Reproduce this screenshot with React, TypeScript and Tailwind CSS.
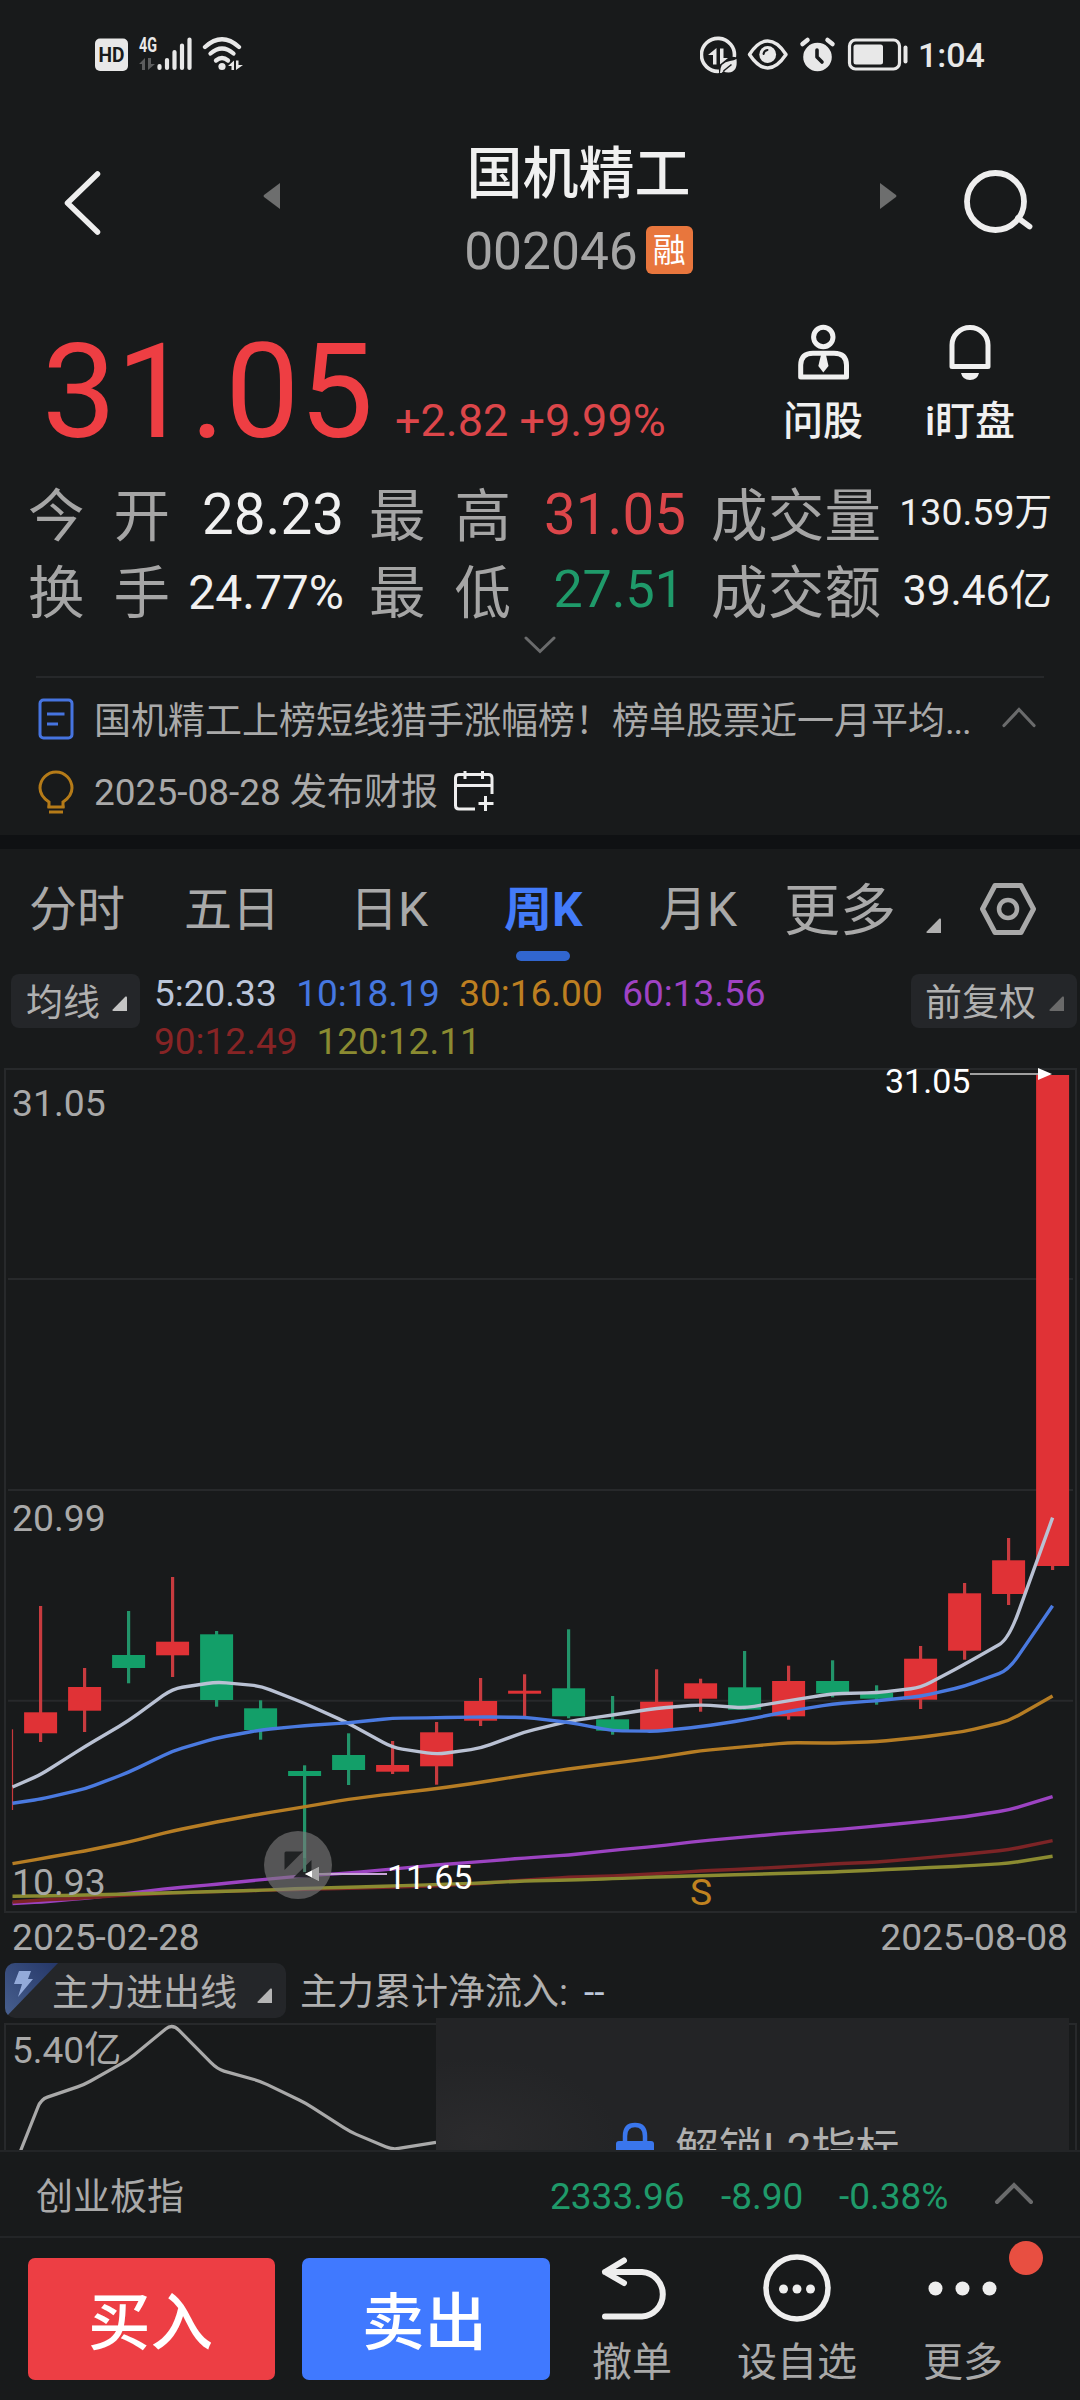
import React from "react";

type Pt = [number, number];

const RED = "#e03236";
const GREEN = "#139f69";

const X0 = 40.6;
const STEP = 44;

/* [up, high, bodyTop, bodyBottom, low] in chart pixels */
const candles: [boolean, number, number, number, number][] = [
  [true, 538, 644.3, 665.3, 674],
  [true, 600, 619, 642.7, 664],
  [false, 543, 587, 600, 615.3],
  [true, 509, 573.7, 587.3, 609],
  [false, 563, 566.3, 632, 638.7],
  [false, 632.3, 640.3, 662, 671.7],
  [false, 697.3, 703, 708, 806],
  [false, 665.3, 687, 702, 717],
  [true, 673, 697, 703.7, 706],
  [true, 654, 664.3, 698.3, 716.7],
  [true, 610, 633, 652.7, 658],
  [true, 606.3, 622.7, 625.7, 648.7],
  [false, 561.3, 620.3, 648.3, 650.3],
  [false, 628, 651.3, 662.7, 666.7],
  [true, 601.3, 633.7, 662.7, 662.7],
  [true, 610.7, 615.3, 630.7, 643.7],
  [false, 583, 619.3, 641.7, 641.7],
  [true, 597.7, 613, 648.3, 651.7],
  [false, 592.3, 613, 625.3, 629.3],
  [false, 617.3, 624.7, 630.7, 636.7],
  [true, 578, 590.7, 631.7, 641],
  [true, 515, 525.3, 582.7, 591.7],
  [true, 470, 492.3, 526, 537],
  [true, 7, 7, 498, 502],
];

const ma5 = [706.7, 678.7, 652.7, 620.7, 614, 618, 635.3, 655.3, 679.7, 686.3, 680.3, 664, 653.3, 647, 640.3, 636.7, 640, 632.7, 625.7, 624.7, 619.7, 596.3, 571.3, 449.7];
const ma10 = [731, 721, 704.3, 683, 670, 662, 657.7, 654.7, 650.3, 649.7, 649, 649.3, 654.3, 662.7, 663.3, 658.7, 652, 643.3, 636, 632.7, 628.3, 618.3, 602, 537.7];
const ma30 = [790.7, 783, 774, 763, 754, 746, 738.7, 731.3, 725.7, 720.7, 714.3, 707.3, 701, 695.3, 689.7, 682.7, 678.7, 674.7, 675, 673.7, 669.3, 663.3, 653, 628];
const ma60 = [834, 830.3, 825.3, 820, 816.3, 811.7, 807.7, 805, 801, 797, 793.7, 790, 787, 782.3, 778.3, 773, 769, 765, 762, 758, 753.7, 748.7, 742, 728.7];
const ma90 = [832, 830, 827, 825, 823.5, 822.3, 821.3, 820.3, 819, 817.7, 815.5, 812, 809.3, 808, 805.7, 803, 801, 798.7, 796, 794, 790.3, 786.3, 781.7, 772.7];
const ma120 = [828, 827, 826, 824.7, 823.5, 822.3, 820.3, 819.3, 818, 816.5, 815, 813, 812, 810.7, 809, 807.7, 806.5, 805.3, 804, 802, 800, 798, 795.3, 788.3];

/* Polyline with slightly rounded joints */
function smooth(pts: Pt[], t = 0.22) {
  let d = `M${pts[0][0]} ${pts[0][1]}`;
  for (let i = 1; i < pts.length - 1; i++) {
    const [px, py] = pts[i - 1];
    const [cx, cy] = pts[i];
    const [nx, ny] = pts[i + 1];
    d += `L${cx + (px - cx) * t} ${cy + (py - cy) * t}Q${cx} ${cy} ${cx + (nx - cx) * t} ${cy + (ny - cy) * t}`;
  }
  const l = pts[pts.length - 1];
  return `${d}L${l[0]} ${l[1]}`;
}

function Line({ start, data, color }: { start: number; data: number[]; color: string }) {
  const pts: Pt[] = [[12.5, start], ...data.map((y, i): Pt => [X0 + i * STEP, y])];
  return <path d={smooth(pts)} fill="none" stroke={color} strokeWidth="3.4" />;
}

function Corner({ color = "#b0b0b0" }: { color?: string }) {
  return (
    <svg width="15" height="15" viewBox="0 0 15 15" className="block shrink-0">
      <path d="M13.5 0.5Q15 0 15 1.5V15H1.5Q0 15 0.5 13.8Z" fill={color} />
    </svg>
  );
}

function StatusBar() {
  return (
    <div className="flex h-[110px] items-center justify-between pl-[95px] pr-[95px]">
      <svg width="150" height="50" viewBox="95 30 150 50" className="block">
        <rect x="95" y="38.500" width="33" height="32.500" rx="5" fill="#e8e8e8" />
        <text x="111.500" y="62" textAnchor="middle" fontSize="20" fontWeight="700" textLength="26" lengthAdjust="spacingAndGlyphs" fill="#181a1b">HD</text>
        <text x="139" y="52" fontSize="20" fontWeight="700" textLength="18" lengthAdjust="spacingAndGlyphs" fill="#e8e8e8">4G</text>
        <path d="M139 64L145 58V70H142V64ZM148 58H151V64H155L148 70Z" fill="#5c5d5e" />
        <g stroke="#e8e8e8" strokeWidth="4.200" strokeLinecap="round">
          <path d="M159.500 66V68M167 60V68M174.500 52V68M182 45.500V68M189.500 39.500V68" />
        </g>
        <g fill="none" stroke="#e8e8e8" strokeWidth="4.300" strokeLinecap="round">
          <path d="M205 47Q222 31.500 239 47" />
          <path d="M210.500 53.500Q222 43.500 233.500 53.500" />
          <path d="M216 60.500Q222 55.500 228 60.500" />
        </g>
        <circle cx="222" cy="66.500" r="3.600" fill="#e8e8e8" />
        <path d="M228 66L234 60.500V70H231.500V66ZM236 60.500H238.500V65H243L236 70Z" fill="#e8e8e8" />
      </svg>
      <div className="flex items-center">
        <svg width="210" height="38" viewBox="700 36 210 38" className="block">
          <path d="M719 71.300A16.500 16.500 0 1 1 734.300 57" fill="none" stroke="#e8e8e8" strokeWidth="3.600" />
          <path d="M708 55L716.500 48V64.500H713V55ZM720 48.500H723.500V58H728L720 64.500Z" fill="#e8e8e8" />
          <path d="M736.500 59Q738 72 728.500 72.500Q725 72.500 723.500 71L721.500 73H720Q720 62 730 61Q734 60.500 736.500 59Z" fill="#e8e8e8" />
          <path d="M723.500 71L731.500 64.500" stroke="#181a1b" strokeWidth="1.500" />
          <path d="M749.500 54.500Q758 41 767.700 41T786 54.500Q777 68 767.700 68T749.500 54.500Z" fill="none" stroke="#e8e8e8" strokeWidth="3.400" strokeLinejoin="round" />
          <circle cx="767.700" cy="54.500" r="8.400" fill="#e8e8e8" />
          <path d="M763.500 54Q764 50.500 767.500 50" fill="none" stroke="#181a1b" strokeWidth="2" strokeLinecap="round" />
          <circle cx="817.500" cy="57" r="14.300" fill="#e8e8e8" />
          <path d="M817 50V57L822 62" fill="none" stroke="#181a1b" strokeWidth="3.600" strokeLinecap="round" strokeLinejoin="round" />
          <path d="M802.500 44L807.500 40M832.500 44L827.500 40" stroke="#e8e8e8" strokeWidth="4.500" strokeLinecap="round" />
          <rect x="849.500" y="40" width="50" height="29" rx="6" fill="none" stroke="#e8e8e8" strokeWidth="3.200" />
          <rect x="853.500" y="44.500" width="29.500" height="20" rx="2.500" fill="#e8e8e8" />
          <path d="M905.500 47.500V61.500" stroke="#e8e8e8" strokeWidth="4" strokeLinecap="round" />
        </svg>
        <span className="w-[75px] pl-[8px] text-[34px] font-medium leading-[40px] whitespace-nowrap text-[#e8e8e8]">1:04</span>
      </div>
    </div>
  );
}

function Header() {
  return (
    <header className="flex h-[190px] items-start">
      <svg width="40" height="70" viewBox="62 168 40 70" className="ml-[62px] mt-[58px] block">
        <path d="M97.500 174L67.500 203L97.500 232" fill="none" stroke="#eeeeee" strokeWidth="5.500" strokeLinecap="round" strokeLinejoin="round" />
      </svg>
      <svg width="18" height="28" viewBox="0 0 18 28" className="ml-[161px] mt-[72px] block">
        <path d="M17 1V27L1 15Q0 14 1 13Z" fill="#6d6e6e" />
      </svg>
      <div className="flex w-[598px] flex-col items-center pr-[3px] pt-[34px]">
        <h1 className="text-[56px] font-medium leading-[60px] text-[#f0f0f0]">国机精工</h1>
        <div className="mt-[22px] flex h-[48px] items-center gap-[8px]">
          <span className="pt-[4px] text-[51.5px] leading-[48px] text-[#a5a5a5]">002046</span>
          <span className="flex h-[48px] w-[47px] items-center justify-center rounded-[6px] bg-[#e8763d] pt-[2px] text-[33px] leading-[46px] text-white">融</span>
        </div>
      </div>
      <svg width="18" height="28" viewBox="0 0 18 28" className="mt-[72px] block">
        <path d="M1 1V27L17 15Q18 14 17 13Z" fill="#6d6e6e" />
      </svg>
      <svg width="72" height="68" viewBox="963 168 72 68" className="ml-[66px] mt-[58px] block">
        <circle cx="995.500" cy="201.500" r="28.500" fill="none" stroke="#eeeeee" strokeWidth="5.800" />
        <path d="M1018 218L1029.500 226.500" stroke="#eeeeee" strokeWidth="5.800" strokeLinecap="round" />
      </svg>
    </header>
  );
}

function Price() {
  return (
    <section className="flex h-[177px] items-start">
      <div className="w-[395px] pl-[42px] pt-[27px] text-[132px] leading-[130px] text-[#ee3e43]">31.05</div>
      <div className="w-[356px] pt-[97px] text-[45px] leading-[48px] whitespace-nowrap text-[#dc464a]">+2.82 +9.99%</div>
      <div className="flex w-[144px] flex-col items-center text-[40px] font-medium leading-[48px] text-[#f0f0f0]">
        <svg width="56" height="60" viewBox="794 322 56 60" className="mt-[22px] block">
          <circle cx="822.300" cy="337" r="9.700" fill="none" stroke="currentColor" strokeWidth="5" />
          <path d="M799.700 377V365Q800 353.200 812 353.200H833Q845.300 353.200 845.500 365V377Z" fill="none" stroke="currentColor" strokeWidth="5" strokeLinejoin="round" />
          <path d="M820 355H825L827.500 366L822.300 372.500L817.300 366Z" fill="currentColor" />
        </svg>
        <span className="mt-[16px]">问股</span>
      </div>
      <div className="flex w-[150px] flex-col items-center text-[40px] font-medium leading-[48px] text-[#f0f0f0]">
        <svg width="46" height="60" viewBox="946.500 322 46 60" className="mt-[22px] block">
          <path d="M951.500 366.500V345A18 17.500 0 0 1 987.500 345V366.500Z" fill="none" stroke="currentColor" strokeWidth="5" strokeLinejoin="round" />
          <path d="M960.500 373H978.500Q977 380 969.500 380T960.500 373Z" fill="currentColor" />
        </svg>
        <span className="mt-[16px]">i盯盘</span>
      </div>
    </section>
  );
}

function Stat({ label, children }: { label: string; children: React.ReactNode }) {
  return (
    <div className="flex items-center justify-between">
      <span className={label.length === 2 ? "flex w-[142px] justify-between pt-[4px] text-[56.5px] leading-[73px] text-[#a5a5a5]" : "flex w-[170px] justify-between pt-[4px] text-[56.5px] leading-[73px] text-[#a5a5a5]"}>
        {label.split("").map((c) => (
          <span key={c}>{c}</span>
        ))}
      </span>
      {children}
    </div>
  );
}

function Stats() {
  return (
    <section className="grid h-[154px] grid-cols-[318px_319px_342px] grid-rows-[77px_77px] gap-x-[23px] pl-[28px] text-[#f0f0f0]">
      <Stat label="今开"><span className="pr-[2px] text-[56.5px]">28.23</span></Stat>
      <Stat label="最高"><span className="pr-[2px] text-[56.5px] text-[#dc464a]">31.05</span></Stat>
      <Stat label="成交量"><span className="pb-[6px] pr-[1px] text-[37.5px]">130.59万</span></Stat>
      <Stat label="换手"><span className="pr-[2px] text-[48px]">24.77%</span></Stat>
      <Stat label="最低"><span className="pb-[6px] pr-[4px] text-[52px] text-[#1f9a6a]">27.51</span></Stat>
      <Stat label="成交额"><span className="pb-[2px] pr-[1px] text-[42.5px]">39.46亿</span></Stat>
    </section>
  );
}

function News() {
  return (
    <section className="text-[37px] text-[#a9a9a9]">
      <div className="flex h-[45px] items-start justify-center pt-[4px]">
        <svg width="32" height="20" viewBox="0 0 32 20" className="block">
          <path d="M2 3L16 16.500L30 3" fill="none" stroke="#6a6b6c" strokeWidth="3" strokeLinecap="round" />
        </svg>
      </div>
      <div className="mx-[36px] mt-0 h-[2px] bg-[#26282a]" />
      <div className="mt-[4px] flex h-[80px] items-center pl-[38px]">
        <svg width="36" height="42" viewBox="38 698 36 42" className="mb-[6px] block">
          <rect x="40" y="700" width="32" height="38" rx="3.500" fill="none" stroke="#4674e0" strokeWidth="3" />
          <path d="M47 714H64.500M47 724H58" stroke="#4674e0" strokeWidth="3.200" />
        </svg>
        <span className="w-[908px] pl-[20px] leading-[56px] whitespace-nowrap">国机精工上榜短线猎手涨幅榜！榜单股票近一月平均<span className="tracking-[-1.3px]">...</span></span>
        <svg width="36" height="24" viewBox="0 0 36 24" className="mb-[10px] ml-[19px] block">
          <path d="M3 20.500L18 4.500L33 20.500" fill="none" stroke="#6a6b6c" strokeWidth="3.200" strokeLinecap="round" />
        </svg>
      </div>
      <div className="flex h-[62px] items-center pl-[38px]">
        <svg width="36" height="46" viewBox="38 768 36 46" className="mb-[3px] block">
          <path d="M49 807V801Q40 795 40 787A16 16 0 0 1 72 787Q72 795 63 801V807" fill="none" stroke="#b57b18" strokeWidth="3" />
          <path d="M47.500 806H64.500M49 811H63" stroke="#b57b18" strokeWidth="3" />
        </svg>
        <span className="w-[378px] pl-[20px] leading-[56px] whitespace-nowrap">2025-08-28 发布财报</span>
        <svg width="44" height="44" viewBox="452 769 44 44" className="mb-[4px] block">
          <path d="M475 809H459Q455.500 809 455.500 805.500V778Q455.500 774.500 459 774.500H488.500Q492 774.500 492 778V794M456 785.500H492M465 771V779M482.500 771V779M485.500 796V811M478.500 803.500H493.500" fill="none" stroke="#eeeeee" strokeWidth="3" />
        </svg>
      </div>
      <div className="mt-[11px] h-[14px] bg-[#0f1113]" />
    </section>
  );
}

function Tabs() {
  return (
    <nav className="flex h-[120px] items-center pl-[29px] text-[48px] whitespace-nowrap text-[#a9a9a9]">
      <span className="w-[155px] pt-[2px]">分时</span>
      <span className="w-[166px] pt-[2px]">五日</span>
      <span className="w-[154px] pt-[2px]">日K</span>
      <span className="relative w-[155px] pt-[2px] font-bold text-[#437bfa]">
        周K
        <span className="absolute left-[12px] top-[67px] h-[10px] w-[54px] rounded-full bg-[#3166cf]" />
      </span>
      <span className="w-[125px] pt-[2px]">月K</span>
      <span className="w-[142px] pt-[4px] text-[56px]">更多</span>
      <span className="pt-[33px]"><Corner /></span>
      <svg width="60" height="56" viewBox="978 881 60 56" className="ml-[37px] block">
        <path d="M982.500 909L995 885.500H1021L1033.500 909L1021 932.500H995Z" fill="none" stroke="#a9a9a9" strokeWidth="5" strokeLinejoin="round" />
        <circle cx="1008" cy="909" r="9" fill="none" stroke="#a9a9a9" strokeWidth="4.500" />
      </svg>
    </nav>
  );
}

function Averages() {
  return (
    <section className="flex h-[99px] items-start text-[37px] whitespace-nowrap">
      <div className="ml-[11px] mt-[5px] flex h-[54px] w-[129px] items-center rounded-[8px] bg-[#242629] pl-[15px] pt-[5px] text-[#b0b0b0]">
        <span className="w-[86px]">均线</span>
        <Corner color="#c4c4c4" />
      </div>
      <div className="w-[771px] pl-[14px] pt-[1px] leading-[48px]">
        <div className="flex gap-[19.5px]">
          <span className="text-[#bcc6da]">5:20.33</span>
          <span className="text-[#4577e0]">10:18.19</span>
          <span className="text-[#bd7f21]">30:16.00</span>
          <span className="text-[#9f42c4]">60:13.56</span>
        </div>
        <div className="flex gap-[19px]">
          <span className="text-[#872425]">90:12.49</span>
          <span className="text-[#8b8b31]">120:12.11</span>
        </div>
      </div>
      <div className="mt-[5px] flex h-[54px] w-[166px] items-center rounded-[8px] bg-[#242629] pl-[14px] pt-[5px] text-[#b0b0b0]">
        <span className="w-[124px]">前复权</span>
        <Corner color="#6a6a6a" />
      </div>
    </section>
  );
}

function KChart() {
  return (
    <svg width="1080" height="845" viewBox="0 0 1080 845" className="block overflow-visible">
      <g fill="none" stroke="#27292b" strokeWidth="2">
        <rect x="5" y="1" width="1071" height="843" />
        <path d="M8 211H1073M8 422H1073M8 632.700H1073" />
      </g>
      <path d="M12.500 661.300V742" stroke="#c8383b" strokeWidth="1.200" />
      {candles.map(([up, h, t, b, l], i) => (
        <g key={i}>
          <path d={`M${X0 + i * STEP} ${h}V${l}`} stroke={up ? "#c73b3f" : "#22946a"} strokeWidth="3.2" />
          <rect x={X0 + i * STEP - 16.5} y={t} width="33" height={b - t} fill={up ? RED : GREEN} />
        </g>
      ))}
      <Line start={719} data={ma5} color="#b9c1d3" />
      <Line start={735.3} data={ma10} color="#4a7ae0" />
      <Line start={795.7} data={ma30} color="#b67d24" />
      <Line start={835.5} data={ma60} color="#9c43c2" />
      <Line start={834} data={ma90} color="#7c2426" />
      <Line start={828.3} data={ma120} color="#8b8b31" />
      <g fontSize="37.300" fill="#a9a9a9">
        <text x="12" y="48">31.05</text>
        <text x="12" y="463">20.99</text>
        <text x="12" y="827">10.93</text>
        <text x="690" y="837" fill="#c08320">S</text>
      </g>
      <path d="M970 6H1040" stroke="#a0a0a0" strokeWidth="2" />
      <path d="M1038 0L1052 6L1038 12Z" fill="#ffffff" />
      <path d="M310 806H387" stroke="#c9a5d8" strokeWidth="2" />
      <path d="M305 806L319 799V813Z" fill="#ffffff" />
      <circle cx="298" cy="797" r="34" fill="#7a7a7a" fillOpacity="0.62" />
      <path d="M286 783.500H303L284.500 802V785Q284.500 783.500 286 783.500ZM311.500 792V809.500H293.500Z" fill="#1b1d1e" fillOpacity="0.9" />
      <path d="M304.600 790V804" stroke="#4d7a69" strokeWidth="3" />
      <path d="M305 806L319 799V813Z" fill="#a5a5a5" />
      <path d="M305 806L312 802.500V809.500Z" fill="#ffffff" />
      <g fontSize="34" fill="#ffffff">
        <text x="885" y="25">31.05</text>
        <text x="387" y="821">11.65</text>
      </g>
    </svg>
  );
}

function SubChart() {
  const pts: Pt[] = [[20.5, 133], [41, 81.3], [84, 66.7], [128, 42], [172.300, 5.500], [217.500, 51.300], [260.500, 63.300], [306, 85.300], [350, 113.700], [392, 131.500], [436, 124.300]];
  return (
    <section>
      <div className="flex h-[50px] items-start justify-between pl-[12px] pr-[12px] pt-[1px] text-[37.200px] leading-[46px] text-[#a9a9a9]">
        <span>2025-02-28</span>
        <span>2025-08-08</span>
      </div>
      <div className="flex h-[55px] items-start text-[37px] whitespace-nowrap text-[#b0b0b0]">
        <div className="ml-[5px] flex h-[55px] w-[281px] items-center overflow-hidden rounded-[10px] bg-[#242629]">
          <svg width="47" height="55" viewBox="0 0 47 55" className="block shrink-0 overflow-visible">
            <defs>
              <linearGradient id="tag" x1="0" y1="1" x2="1" y2="0">
                <stop offset="0" stopColor="#48608f" />
                <stop offset="1" stopColor="#253768" />
              </linearGradient>
            </defs>
            <path d="M0 0H53L0 55Z" fill="url(#tag)" />
            <path d="M14 8H26L23 16H28L13 34L17 21H9Z" fill="#93aad9" />
          </svg>
          <span className="w-[205px] pt-[5px]">主力进出线</span>
          <span className="pt-[10px]"><Corner color="#b5b5b5" /></span>
        </div>
        <span className="pl-[14px] leading-[60px]">
          主力累计净流入<span className="pr-[16px]">:</span><span className="text-[#bcc6da]">--</span>
        </span>
      </div>
      <div className="relative h-[132px] overflow-hidden">
        <svg width="1080" height="132" viewBox="0 0 1080 132" className="block">
          <path d="M5 140V6H1076V140" fill="none" stroke="#27292b" strokeWidth="2" />
          <text x="12" y="45" fontSize="37" fill="#a9a9a9">5.40亿</text>
          <path d={smooth(pts, 0.15)} fill="none" stroke="#a9a9a9" strokeWidth="3.200" />
        </svg>
        <div className="absolute left-[436px] top-0 flex h-[132px] w-[633px] items-start bg-[#232426] bg-[radial-gradient(ellipse_140px_80px_at_40px_120px,#2b2b2d,#232426)] pl-[180px] pt-[104px]">
          <svg width="38" height="44" viewBox="0 0 38 44" className="block shrink-0">
            <path d="M9 21V14Q9 3 19 3T29 14V21" fill="none" stroke="#3a76ec" strokeWidth="4.500" />
            <rect x="0" y="19" width="38" height="24" rx="3" fill="#3a76ec" />
          </svg>
          <span className="pl-[21px] text-[44px] leading-[56px] whitespace-nowrap text-[#b0b0b0]">解锁L2指标</span>
        </div>
      </div>
    </section>
  );
}

function IndexBar() {
  return (
    <section className="flex h-[88px] items-center border-y-2 border-[#232527] pl-[36px] text-[37px] whitespace-nowrap text-[#1f9a6a]">
      <span className="w-[514px] pt-[6px] text-[#a9a9a9]">创业板指</span>
      <span className="w-[171px] pt-[4px]">2333.96</span>
      <span className="w-[118px] pt-[4px]">-8.90</span>
      <span className="w-[154px] pt-[4px]">-0.38%</span>
      <svg width="42" height="26" viewBox="0 0 42 26" className="mb-[2px] block">
        <path d="M4 22L21 5L38 22" fill="none" stroke="#6a6b6c" strokeWidth="4" strokeLinecap="round" />
      </svg>
    </section>
  );
}

function BottomBar() {
  return (
    <footer className="flex h-[162px] items-start pl-[28px] text-[40px] whitespace-nowrap text-[#a9a9a9]">
      <button className="mt-[20px] h-[122px] w-[247px] rounded-[7px] bg-[#ed3e44] pr-[2px] pt-[10px] text-[62.5px] font-medium leading-[112px] text-white">买入</button>
      <button className="ml-[27px] mt-[20px] h-[122px] w-[248px] rounded-[7px] bg-[#4079ff] pr-[3px] pt-[10px] text-[62.5px] font-medium leading-[112px] text-white">卖出</button>
      <div className="ml-[40px] flex w-[84px] flex-col items-center">
        <svg width="72" height="72" viewBox="599 2252 72 72" className="ml-[6px] mt-[14px] block">
          <path d="M605 2272H642A22.300 22.300 0 0 1 642 2316.500H605M624 2260.500L605 2272L624 2283" fill="none" stroke="#eeeeee" strokeWidth="6" strokeLinecap="round" strokeLinejoin="round" />
        </svg>
        <span className="mt-[9px] leading-[60px]">撤单</span>
      </div>
      <div className="ml-[62px] flex w-[122px] flex-col items-center">
        <svg width="72" height="72" viewBox="761 2252 72 72" className="mt-[14px] block">
          <circle cx="797" cy="2288" r="31" fill="none" stroke="#eeeeee" strokeWidth="5.500" />
          <g fill="#eeeeee">
            <circle cx="783.500" cy="2289" r="4.500" />
            <circle cx="797" cy="2289" r="4.500" />
            <circle cx="810.500" cy="2289" r="4.500" />
          </g>
        </svg>
        <span className="mt-[9px] leading-[60px]">设自选</span>
      </div>
      <div className="relative ml-[63px] flex w-[84px] flex-col items-center">
        <svg width="72" height="72" viewBox="927 2252 72 72" className="mt-[14px] block">
          <g fill="#eeeeee">
            <circle cx="935.500" cy="2288.500" r="7" />
            <circle cx="962.500" cy="2288.500" r="7" />
            <circle cx="989.500" cy="2288.500" r="7" />
          </g>
        </svg>
        <span className="mt-[9px] leading-[60px]">更多</span>
        <span className="absolute left-[88px] top-[3px] h-[34px] w-[34px] rounded-full bg-[#e84f41]" />
      </div>
    </footer>
  );
}

export default function App() {
  return (
    <main className="h-[2400px] w-[1080px] overflow-hidden bg-[#181a1b] font-['Roboto','Noto_Sans_CJK_SC',sans-serif] leading-none">
      <StatusBar />
      <Header />
      <Price />
      <Stats />
      <News />
      <Tabs />
      <Averages />
      <KChart />
      <SubChart />
      <IndexBar />
      <BottomBar />
    </main>
  );
}
